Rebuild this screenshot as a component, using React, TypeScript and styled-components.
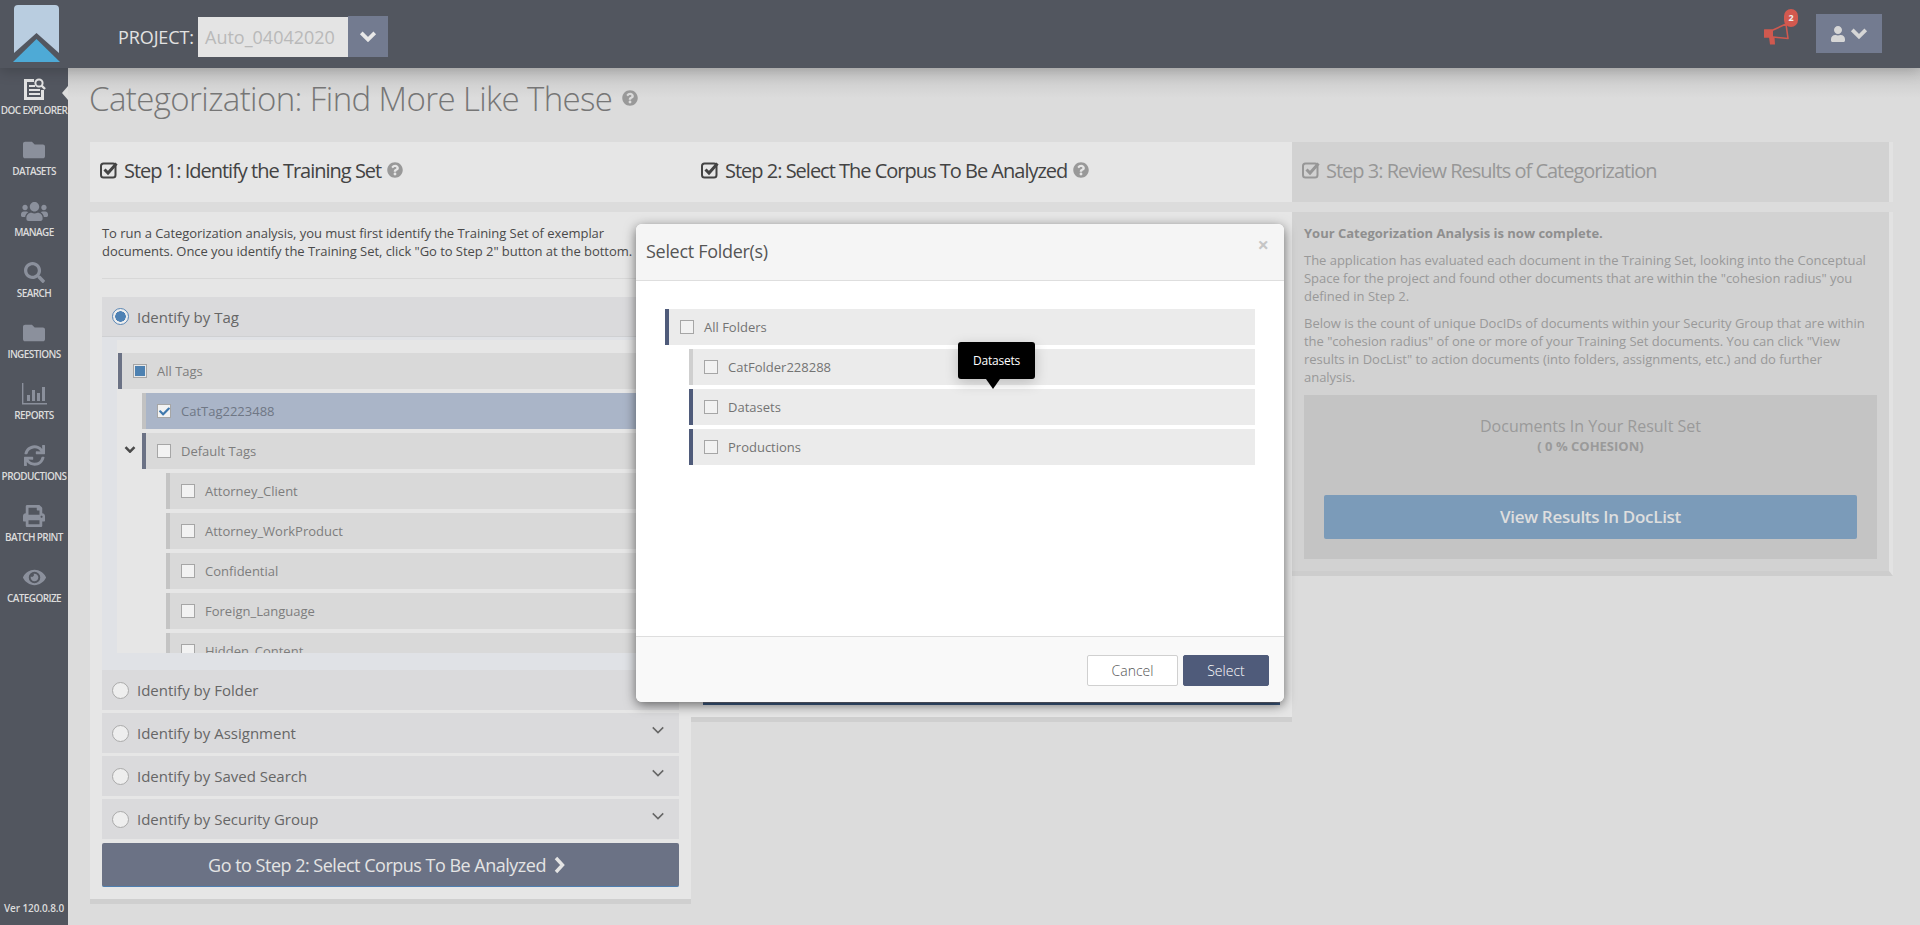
import React from "react";
import styled, { createGlobalStyle } from "styled-components";
import {
  FaFolder, FaUsers, FaSearch, FaSync, FaPrint, FaEye, FaUser,
  FaQuestionCircle, FaCheck,
} from "react-icons/fa";

const Global = createGlobalStyle`
  html, body { margin: 0; padding: 0; height: 100%; overflow: hidden; }
  body { font-family: "Open Sans", "Liberation Sans", sans-serif; background: #dcdcdc; }
  * { box-sizing: border-box; }
`;

const Page = styled.div`
  position: relative; width: 1920px; height: 925px; overflow: hidden;
  display: flex; flex-direction: column;
`;
const TopBar = styled.header`
  height: 68px; flex: none; background: #52565f; display: flex; align-items: flex-start;
  position: relative; z-index: 2; box-shadow: 0 2px 14px rgba(0,0,0,.22);
`;
const LogoWrap = styled.div`margin: 5px 0 0 13px; width: 48px; height: 58px; flex: none;`;
const ProjectLabel = styled.span`
  margin: 17px 0 0 57px; width: 80px; line-height: 40px; font-size: 18px; color: #e2e2e2; letter-spacing: -.1px; flex: none;
`;
const ProjectValue = styled.div`
  margin-top: 17px; width: 150px; height: 40px; background: #e4e4e4; color: #b9b9b9;
  font-size: 18px; line-height: 40px; padding-left: 7px; flex: none;
`;
const ProjectCaret = styled.div`
  margin-top: 16px; width: 40px; height: 41px; background: #737b90; color: #e8e8e8;
  display: flex; align-items: center; justify-content: center; flex: none;
`;
const TopRight = styled.div`
  margin-left: auto; margin-right: 38px; display: flex; align-items: flex-start;
`;
const Alert = styled.div`
  position: relative; width: 27px; height: 24px; margin: 22px 25px 0 0; color: #d0594f; line-height: 0;
`;
const Badge = styled.span`
  position: absolute; left: 20px; top: -13px; width: 14px; height: 18px; border-radius: 7px;
  background: #d2594f; color: #eee; font-size: 9px; font-weight: 700; line-height: 18px; text-align: center;
`;
const UserButton = styled.div`
  margin-top: 14px; width: 66px; height: 39px; background: #737b90; color: #d6d6d6;
  display: flex; align-items: center; justify-content: center; gap: 4px; font-size: 16px;
`;

const Body = styled.div`flex: 1; display: flex; min-height: 0;`;
const Sidebar = styled.nav`
  width: 68px; flex: none; background: #52565f; display: flex; flex-direction: column; align-items: center; position: relative;
`;
const NavItem = styled.div<{ $active?: boolean }>`
  position: relative; width: 68px; height: 61px; padding-top: 9px; display: flex; flex-direction: column; align-items: center;
  color: ${(p) => (p.$active ? "#e2e2e2" : "#8b909c")};
  ${(p) => p.$active && `&::after {
    content: ""; position: absolute; right: 0; top: 18px; border: 7px solid transparent; border-right: 6px solid #dcdcdc; border-left: 0;
  }`}
`;
const NavIcon = styled.div<{ $size: number }>`
  height: 24px; display: flex; align-items: center; justify-content: center; font-size: ${(p) => p.$size}px; margin-bottom: 2px;
`;
const NavLabel = styled.span`
  font-size: 10px; line-height: 14px; font-weight: 600; color: #dcdcdc; white-space: nowrap; letter-spacing: -.6px;
`;
const Version = styled.div`
  margin-top: auto; margin-bottom: 10px; font-size: 10px; line-height: 14px; font-weight: 600; color: #dcdcdc; white-space: nowrap; letter-spacing: -.1px;
`;

const Main = styled.main`
  flex: 1; min-width: 0; padding: 0 27px 0 22px;
  background: linear-gradient(#c6c6c6 0, #dcdcdc 30px);
`;
const Title = styled.h1`
  margin: 0 0 0 -1px; height: 74px; display: flex; align-items: center; gap: 10px; padding-bottom: 14px;
  font-size: 33px; font-weight: 300; color: #767676; letter-spacing: -.6px; white-space: nowrap;
`;
const HelpMark = styled.span<{ $size: number }>`
  color: #999; font-size: ${(p) => p.$size}px; line-height: 0; display: inline-flex; letter-spacing: 0;
`;
const Columns = styled.div`display: grid; grid-template-columns: 601px 601px 601px; align-items: start;`;
const Column = styled.section`display: flex; flex-direction: column; gap: 10px;`;
const StepHead = styled.div<{ $muted?: boolean }>`
  height: 60px; display: flex; align-items: center; gap: 6px; padding: 0 0 4px 10px;
  background: ${(p) => (p.$muted ? "#d2d2d2" : "#e6e6e6")};
  color: ${(p) => (p.$muted ? "#979797" : "#434343")};
  ${(p) => p.$muted && "border-right: 4px solid #e2e2e2;"}
  font-size: 20px; letter-spacing: -1px; white-space: nowrap;
`;
const CheckSquare = styled.svg`width: 18px; height: 18px; flex: none;`;

const Panel = styled.div<{ $muted?: boolean }>`
  background: ${(p) => (p.$muted ? "#d2d2d2" : "#e6e6e6")}; padding: 12px;
  border-bottom: 5px solid ${(p) => (p.$muted ? "#cdcdcd" : "#cfcfcf")};
  ${(p) => p.$muted && "border-right: 4px solid #e2e2e2;"}
`;
const IntroText = styled.p`
  margin: 0; width: 560px; font-size: 13px; line-height: 18px; color: #4a4a4a; letter-spacing: -.05px;
`;
const Rule = styled.hr`border: 0; border-top: 1px solid #d8d8d8; margin: 18px 0;`;
const Methods = styled.div`display: flex; flex-direction: column; gap: 3px;`;
const MethodRow = styled.div<{ $open?: boolean }>`
  height: 40px; background: #dadadc; display: flex; align-items: center; gap: 8px; padding: 0 14px 0 10px;
  font-size: 15px; color: #666; letter-spacing: 0; position: relative;
  ${(p) => p.$open && "border-bottom: 1px solid #cfd0d2;"}
`;
const Radio = styled.span<{ $on?: boolean }>`
  width: 17px; height: 17px; border-radius: 50%; flex: none; background: #eee;
  border: 1px solid ${(p) => (p.$on ? "#5b87b5" : "#aaa")};
  ${(p) => p.$on && "background: radial-gradient(circle, #4f82b4 0 5px, #eee 5.5px);"}
`;
const RowCaret = styled.span`margin-left: auto; color: #666; line-height: 0; padding-bottom: 6px;`;
const TagSection = styled.div`background: #e0e2e6; padding: 3px 12px 18px 15px; margin-bottom: -1px;`;
const TagTree = styled.div`
  height: 313px; overflow: hidden; background: #e6e6e6; padding-top: 13px; display: flex; flex-direction: column; gap: 4px;
`;
const TreeRow = styled.div<{ $indent: number; $bar: string; $bg: string; $text: string }>`
  position: relative; flex: none; height: 36px; margin-left: ${(p) => p.$indent}px;
  background: ${(p) => p.$bg}; border-left: 4px solid ${(p) => p.$bar};
  display: flex; align-items: center; gap: 10px; padding-left: 11px;
  font-size: 13px; color: ${(p) => p.$text};
`;
const Box = styled.span<{ $fill?: boolean }>`
  width: 14px; height: 14px; flex: none; background: #f2f2f2; border: 1px solid #a6a6a6;
  display: flex; align-items: center; justify-content: center; color: #3f78ad; font-size: 11px;
  ${(p) => p.$fill && "background: #4d81b1; box-shadow: inset 0 0 0 1px #e8e8e8;"}
`;
const TreeCaret = styled.span`
  position: absolute; left: -22px; top: 13px; color: #4a4a4a; line-height: 0;
`;
const GoButton = styled.div`
  margin-top: 1px; height: 44px; background: #6b7285; border-bottom: 1px solid #4f7fb0; border-radius: 2px; color: #e4e4e4;
  display: flex; align-items: center; justify-content: center; gap: 8px; padding-right: 8px; font-size: 18px; letter-spacing: -.5px;
`;
const Step2Panel = styled.div`
  height: 510px; background: #e6e6e6; border-bottom: 5px solid #cfcfcf; padding: 0 12px 12px; display: flex; align-items: flex-end;
`;
const Step2Edge = styled.div`flex: 1; height: 44px; background: #6b7285; border-bottom: 2px solid #3c5a80;`;

const StrongLine = styled.p`margin: 0 0 9px; font-size: 13px; line-height: 18px; font-weight: 700; color: #8f8f8f;`;
const MutedPara = styled.p`margin: 0 0 9px; width: 568px; font-size: 13px; line-height: 18px; color: #999; letter-spacing: -.02px;`;
const ResultBox = styled.div`
  height: 164px; background: #c4c4c4; padding: 20px 20px 0; text-align: center; display: flex; flex-direction: column; align-items: center;
`;
const ResultTitle = styled.div`font-size: 16px; line-height: 22px; color: #9a9a9a;`;
const ResultSub = styled.div`font-size: 13px; line-height: 18px; font-weight: 700; color: #9a9a9a;`;
const ViewButton = styled.div`
  margin-top: 40px; width: 533px; height: 44px; background: #7b9bb9; border-radius: 2px; color: #dedede; flex: none;
  font-size: 17px; font-weight: 600; line-height: 44px; letter-spacing: -.3px;
`;

const Modal = styled.div`
  position: absolute; left: 636px; top: 224px; width: 648px; height: 478px; z-index: 5; border-radius: 6px; overflow: visible;
  background: #fff; box-shadow: 0 3px 12px rgba(0,0,0,.55); display: flex; flex-direction: column;
`;
const ModalHead = styled.div`
  height: 57px; flex: none; background: #f5f5f5; border-bottom: 1px solid #dedede; border-radius: 6px 6px 0 0;
  display: flex; align-items: center; justify-content: space-between; padding: 0 15px 2px 10px;
`;
const ModalTitle = styled.span`font-size: 18px; color: #555; letter-spacing: -.3px;`;
const CloseMark = styled.span`font-size: 20px; font-weight: 700; color: #c6c6c6; margin-bottom: 13px;`;
const ModalBody = styled.div`
  flex: 1; position: relative; padding: 28px 29px 0 29px; display: flex; flex-direction: column; gap: 4px;
`;
const Tooltip = styled.div`
  position: absolute; left: 322px; top: 61px; width: 77px; height: 37px; background: #000; color: #fff; border-radius: 3px;
  font-size: 12px; line-height: 37px; text-align: center; letter-spacing: -.2px; box-shadow: 0 4px 14px rgba(0,0,0,.2);
  &::after {
    content: ""; position: absolute; left: 28px; bottom: -10px;
    border-style: solid; border-width: 10px 7px 0; border-color: #000 transparent transparent;
  }
`;
const ModalFoot = styled.div`
  height: 66px; flex: none; background: #f9f9f9; border-top: 1px solid #dedede; border-radius: 0 0 6px 6px;
  display: flex; justify-content: flex-end; align-items: flex-start; gap: 5px; padding: 18px 15px 0 0;
`;
const FootButton = styled.div<{ $primary?: boolean }>`
  width: ${(p) => (p.$primary ? "86px" : "91px")}; height: 31px; border-radius: 2px; text-align: center;
  font-size: 14px; font-weight: 300; line-height: 30px;
  background: ${(p) => (p.$primary ? "#4f5b7a" : "#fff")};
  color: ${(p) => (p.$primary ? "#fff" : "#555")};
  border: 1px solid ${(p) => (p.$primary ? "#4f5b7a" : "#d0d0d0")};
`;

const CheckIcon = ({ color }: { color: string }) => (
  <CheckSquare viewBox="0 0 18 18">
    <rect x="1" y="2.5" width="14.5" height="14" rx="2.5" fill="none" stroke={color} strokeWidth="2" />
    <path d="M4.5 8.5 L8 12 L16.5 2.5" fill="none" stroke={color} strokeWidth="3" />
  </CheckSquare>
);

const Chevron = ({ w, thin }: { w: number; thin?: boolean }) => (
  <svg width={w} height={(w * 12) / 20} viewBox="0 0 20 12">
    <path d="M2.5 2 L10 9.5 L17.5 2" fill="none" stroke="currentColor" strokeWidth={thin ? 2.2 : 4.2} />
  </svg>
);

const ChevronRight = () => (
  <svg width="11" height="18" viewBox="0 0 11 18">
    <path d="M2 2 L8.5 9 L2 16" fill="none" stroke="currentColor" strokeWidth="3.4" />
  </svg>
);

const Logo = () => (
  <svg width="48" height="58" viewBox="0 0 48 58">
    <path d="M1 4 Q1 0 5 0 H42 Q46 0 46 4 V48 L23.5 28 L1 48 Z" fill="#b9cde0" />
    <path d="M0 57 L23.5 34 L47 57 Z" fill="#4eaad6" />
  </svg>
);

const Bullhorn = () => (
  <svg width="27" height="24" viewBox="0 0 27 24">
    <path d="M0.7 8 H9 L22 2 L24 16.5 L9 15 H0.7 Z" fill="none" stroke="currentColor" strokeWidth="1.6" strokeLinejoin="round" />
    <path d="M0.7 8 H9 V15 H10.5 L11 22.5 H6 L5 15 H0.7 Z" fill="currentColor" />
  </svg>
);

const DocExplorerIcon = () => (
  <svg width="24" height="24" viewBox="0 0 24 24">
    <path d="M2 2 H12 V5 H5 V20 H19 V13 H22 V23 H2 Z" fill="currentColor" />
    <path d="M7 8 H13 V10 H7 Z M7 12 H18 V14 H7 Z M7 16 H18 V18 H7 Z" fill="currentColor" />
    <circle cx="17" cy="6" r="3.6" fill="none" stroke="currentColor" strokeWidth="2" />
    <path d="M19.5 8.5 L23 12" stroke="currentColor" strokeWidth="2.4" />
  </svg>
);

const ReportsIcon = () => (
  <svg width="27" height="24" viewBox="0 0 27 24">
    <path d="M1 1 H2.4 V21 H26 V22.5 H1 Z" fill="currentColor" />
    <path d="M6 13 H9 V19 H6 Z M11 8 H14 V19 H11 Z M16 11 H19 V19 H16 Z M21 5 H24 V19 H21 Z" fill="currentColor" />
  </svg>
);

const navItems: { label: string; icon: React.ReactNode; size: number; active?: boolean }[] = [
  { label: "DOC EXPLORER", icon: <DocExplorerIcon />, size: 22, active: true },
  { label: "DATASETS", icon: <FaFolder />, size: 22 },
  { label: "MANAGE", icon: <FaUsers />, size: 27 },
  { label: "SEARCH", icon: <FaSearch />, size: 21 },
  { label: "INGESTIONS", icon: <FaFolder />, size: 22 },
  { label: "REPORTS", icon: <ReportsIcon />, size: 22 },
  { label: "PRODUCTIONS", icon: <FaSync />, size: 21 },
  { label: "BATCH PRINT", icon: <FaPrint />, size: 22 },
  { label: "CATEGORIZE", icon: <FaEye />, size: 23 },
];

const DARK = "#6b7285";
const PALE = "#c4c4c4";
const TEXT = "#7d7d7d";
const tagChildren = ["Attorney_Client", "Attorney_WorkProduct", "Confidential", "Foreign_Language", "Hidden_Content"];
const methods = ["Identify by Folder", "Identify by Assignment", "Identify by Saved Search", "Identify by Security Group"];
const folders = [
  { name: "All Folders", indent: 0, bar: "#4f5b7a" },
  { name: "CatFolder228288", indent: 24, bar: "#cfcfcf" },
  { name: "Datasets", indent: 24, bar: "#4f5b7a" },
  { name: "Productions", indent: 24, bar: "#4f5b7a" },
];

export default function App() {
  return (
    <Page>
      <Global />
      <TopBar>
        <LogoWrap><Logo /></LogoWrap>
        <ProjectLabel>PROJECT:</ProjectLabel>
        <ProjectValue>Auto_04042020</ProjectValue>
        <ProjectCaret><Chevron w={18} /></ProjectCaret>
        <TopRight>
          <Alert>
            <Bullhorn />
            <Badge>2</Badge>
          </Alert>
          <UserButton><FaUser /><Chevron w={18} /></UserButton>
        </TopRight>
      </TopBar>
      <Body>
        <Sidebar>
          {navItems.map((n) => (
            <NavItem key={n.label} $active={n.active}>
              <NavIcon $size={n.size}>{n.icon}</NavIcon>
              <NavLabel>{n.label}</NavLabel>
            </NavItem>
          ))}
          <Version>Ver 120.0.8.0</Version>
        </Sidebar>
        <Main>
          <Title>
            Categorization: Find More Like These
            <HelpMark $size={16}><FaQuestionCircle /></HelpMark>
          </Title>
          <Columns>
            <Column>
              <StepHead>
                <CheckIcon color="#434343" />
                Step 1: Identify the Training Set
                <HelpMark $size={16}><FaQuestionCircle /></HelpMark>
              </StepHead>
              <Panel>
                <IntroText>
                  To run a Categorization analysis, you must first identify the Training Set of exemplar documents. Once you identify the Training Set, click "Go to Step 2" button at the bottom.
                </IntroText>
                <Rule />
                <MethodRow $open><Radio $on />Identify by Tag</MethodRow>
                <TagSection>
                  <TagTree>
                    <TreeRow $indent={1} $bar={DARK} $bg="#d9d9d9" $text={TEXT}><Box $fill />All Tags</TreeRow>
                    <TreeRow $indent={25} $bar="#c2c2c2" $bg="#aab5c8" $text="#6f7785"><Box><FaCheck /></Box>CatTag2223488</TreeRow>
                    <TreeRow $indent={25} $bar={DARK} $bg="#d9d9d9" $text={TEXT}>
                      <TreeCaret><Chevron w={12} /></TreeCaret>
                      <Box />Default Tags
                    </TreeRow>
                    {tagChildren.map((t) => (
                      <TreeRow key={t} $indent={49} $bar={PALE} $bg="#d9d9d9" $text={TEXT}><Box />{t}</TreeRow>
                    ))}
                  </TagTree>
                </TagSection>
                <Methods>
                  {methods.map((m) => (
                    <MethodRow key={m}>
                      <Radio />{m}
                      <RowCaret><Chevron w={14} thin /></RowCaret>
                    </MethodRow>
                  ))}
                  <GoButton>Go to Step 2: Select Corpus To Be Analyzed <ChevronRight /></GoButton>
                </Methods>
              </Panel>
            </Column>
            <Column>
              <StepHead>
                <CheckIcon color="#434343" />
                Step 2: Select The Corpus To Be Analyzed
                <HelpMark $size={16}><FaQuestionCircle /></HelpMark>
              </StepHead>
              <Step2Panel><Step2Edge /></Step2Panel>
            </Column>
            <Column>
              <StepHead $muted>
                <CheckIcon color="#979797" />
                Step 3: Review Results of Categorization
              </StepHead>
              <Panel $muted>
                <StrongLine>Your Categorization Analysis is now complete.</StrongLine>
                <MutedPara>The application has evaluated each document in the Training Set, looking into the Conceptual Space for the project and found other documents that are within the "cohesion radius" you defined in Step 2.</MutedPara>
                <MutedPara>Below is the count of unique DocIDs of documents within your Security Group that are within the "cohesion radius" of one or more of your Training Set documents. You can click "View results in DocList" to action documents (into folders, assignments, etc.) and do further analysis.</MutedPara>
                <ResultBox>
                  <ResultTitle>Documents In Your Result Set</ResultTitle>
                  <ResultSub>( 0 % COHESION)</ResultSub>
                  <ViewButton>View Results In DocList</ViewButton>
                </ResultBox>
              </Panel>
            </Column>
          </Columns>
        </Main>
      </Body>
      <Modal>
        <ModalHead>
          <ModalTitle>Select Folder(s)</ModalTitle>
          <CloseMark>×</CloseMark>
        </ModalHead>
        <ModalBody>
          {folders.map((f) => (
            <TreeRow key={f.name} $indent={f.indent} $bar={f.bar} $bg="#ebebeb" $text="#737373"><Box />{f.name}</TreeRow>
          ))}
          <Tooltip>Datasets</Tooltip>
        </ModalBody>
        <ModalFoot>
          <FootButton>Cancel</FootButton>
          <FootButton $primary>Select</FootButton>
        </ModalFoot>
      </Modal>
    </Page>
  );
}
